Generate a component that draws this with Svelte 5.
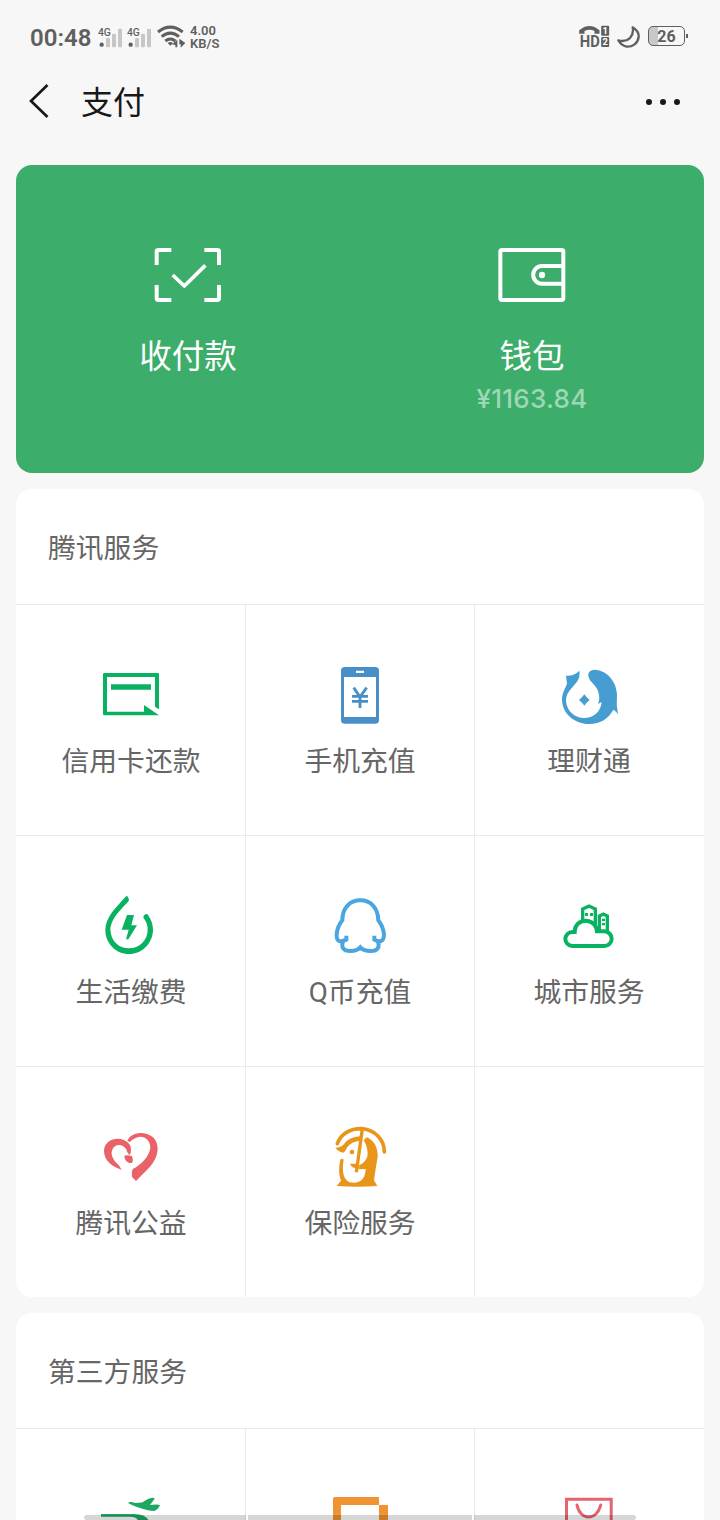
<script>
  const tencent = [
    { icon: 'card', label: '信用卡还款', box: '123 0 240 240' },
    { icon: 'phone', label: '手机充值', box: '0 0 240 240' },
    { icon: 'fish', label: '理财通', box: '687 0 240 240' },
    { icon: 'drop', label: '生活缴费', box: '3 3 240 240' },
    { icon: 'penguin', label: 'Q币充值', box: '0 3 240 240' },
    { icon: 'city', label: '城市服务', box: '687 3 240 240' },
    { icon: 'heart', label: '腾讯公益', box: '3 6 240 240' },
    { icon: 'shield', label: '保险服务', box: '0 6 240 240' },
    null,
  ];

  const thirdParty = [
    { icon: 'plane', box: '91 1479 80 80' },
    { icon: 'order', box: '320 1479 80 80' },
    { icon: 'bag', box: '549 1479 80 80' },
  ];
</script>

{#snippet glyph(name)}
  {#if name === 'card'}
    <g fill="#09b261">
      <path d="M163 54H323q4 0 4 4V163L315 155V66H171V170H282V150L327 181H163q-4 0-4-4V58q0-4 4-4z" />
      <path d="M183 88H303V104H183z" />
    </g>
  {:else if name === 'phone'}
    <rect x="63" y="36" width="114" height="170" rx="11" fill="#488fca" />
    <path d="M72 66H168V186H72zM108 47H132V54H108z" fill="#fff" />
    <path d="M101 98L120 126L140 98M96 124H144M96 139H144M120 124V159" fill="none" stroke="#488fca" stroke-width="8.500" />
  {:else if name === 'fish'}
    <g fill="#459dd2">
      <path d="M738 62Q762 64 778 47Q782 68 768 84C752 103 738 115 738 138C740 168 765 190 795 189C822 188 842 170 845 141L834 147C840 135 838 120 834 108C828 92 812 82 807 70C800 52 812 44 824 44C862 46 890 80 891 120Q888 150 894 178Q888 168 880 164C866 190 842 207 808 207C762 207 726 175 726 132C727 110 738 96 741 86Q739 72 738 62Z" />
      <path d="M793 118Q800 128 809 135Q800 142 793 152Q786 142 777 135Q786 128 793 118z" />
    </g>
  {:else if name === 'drop'}
    <g fill="#09b261">
      <path d="M110 32Q119 40 116 48C106 62 63 95 61 134C63 168 86 190 117 190C148 190 173 166 173 134C173 118 168 108 160 98Q160 88 172 87Q189 110 189 135C188 176 156 207 117 207C78 207 46 176 46 135C46 95 80 65 110 32Z" />
      <path d="M111 90H132L124 121H141L115 163H108L116 134H95z" />
    </g>
  {:else if name === 'penguin'}
    <g fill="none" stroke="#4ba5df" stroke-width="12">
      <path d="M79 152V164Q66 170 58 168Q49 165 50 148Q52 124 67 106C67 68 90 46 121 46C152 46 174 68 175 106Q189 124 192 148Q192 165 183 168Q175 170 163 164V152" />
      <path d="M70 166Q58 198 92 198Q112 198 121 187Q131 198 152 198Q184 198 173 166" />
    </g>
  {:else if name === 'city'}
    <g fill="none" stroke="#09b261" stroke-width="12">
      <path d="M757 183a20 20 0 0 1 0-42H764C764 121 778 107 797 107C816 107 830 121 831 139H853a21 21 0 0 1 0 44z" />
      <path d="M788 106V72L807 63L826 72V124" stroke-width="10" />
      <path d="M838 135V93L850 87L862 93V138" stroke-width="10" />
    </g>
    <path d="M795 84h9v9h-9zM810 84h9v9h-9zM846 101h9v7h-9zM846 114h9v7h-9z" fill="#09b261" />
  {:else if name === 'heart'}
    <g fill="#ea6168">
      <path d="M42 108C42 84 62 71 84 71C106 72 123 86 123 102Q124 114 118 120Q110 113 109 103Q98 88 84 90C70 93 64 106 65 118Q68 136 86 150L95 164C68 156 42 138 42 108Z" />
      <path d="M103 122Q112 118 126 124Q131 134 126 144H118Q102 136 103 122z" />
      <path d="M112 76Q122 56 150 54C185 54 204 74 203 104C200 145 168 165 138 198L126 186Q124 170 128 162C152 150 178 125 181 98C181 78 168 65 150 65Q130 68 119 82Z" />
    </g>
  {:else if name === 'shield'}
    <g fill="none" stroke="#e8951a" stroke-width="11" stroke-linecap="round">
      <path d="M52 86C62 56 92 41 123 41C165 43 193 75 193 111" />
      <path d="M127 42L109 172" stroke-linecap="butt" stroke-width="10" />
    </g>
    <g fill="#e8951a">
      <path d="M140 67C162 75 174 98 173 125Q166 165 162 196L172 213Q110 217 50 213L63 197C55 175 57 155 61 134Q66 128 71 134Q66 160 71 180Q77 203 100 203C125 203 136 188 137 162L117 163L118 150C137 142 146 128 142 105Q139 88 131 76Z" />
      <path d="M46 98Q62 97 70 89Q86 66 120 64V77Q94 80 82 96Q76 110 70 113Q54 110 46 98z" />
      <circle cx="96" cy="111" r="7" />
      <path d="M90 146H116V161Q94 160 90 146z" />
    </g>
  {:else if name === 'plane'}
    <g fill="#1fa862">
      <path d="M128 1503Q129 1501.500 132 1502L135 1503L142 1502.500Q149 1498 152 1497.700Q155 1497.700 154.500 1499L150 1505Q157 1504 160 1505Q158 1510 154 1511L149 1510.500Q137 1508 128 1503z" />
      <path d="M101 1514H134Q146 1514 149 1521H138Q137 1516.700 130 1516.700H101z" />
    </g>
  {:else if name === 'order'}
    <path d="M335 1497H379V1505H388V1560H379V1505H341V1560H333V1499Q333 1497 335 1497z" fill="#f09332" />
  {:else if name === 'bag'}
    <g fill="none" stroke="#e5646d" stroke-width="3">
      <path d="M566.500 1560V1499.200H611.200V1560" />
      <path d="M577 1505C580 1521 597 1521 600.700 1505" stroke-linecap="round" />
    </g>
  {/if}
{/snippet}

{#snippet section(title, items)}
  <section class="panel">
    <h2>{title}</h2>
    <div class="grid">
      {#each items as item}
        <div class="cell">
          {#if item}
            <svg class="cell-icon" viewBox={item.box} aria-hidden="true">
              {@render glyph(item.icon)}
            </svg>
            {#if item.label}<span>{item.label}</span>{/if}
          {/if}
        </div>
      {/each}
    </div>
  </section>
{/snippet}

{#snippet signal()}
  <svg class="signal" viewBox="234 33 72 63" aria-hidden="true">
    <g fill="#c6c6c6">
      <rect x="258" y="66" width="12" height="28" rx="4" />
      <rect x="276" y="53" width="12" height="41" rx="4" />
      <rect x="294" y="38" width="12" height="56" rx="4" />
    </g>
    <circle cx="245" cy="86" r="6.500" fill="#5f5f5f" />
    <text x="234" y="60" font-size="31" font-weight="500" fill="#5f5f5f">4G</text>
  </svg>
{/snippet}

<div class="screen">
  <div class="status">
    <span class="time">00:48</span>
    {@render signal()}
    {@render signal()}
    <svg class="wifi" viewBox="411 30 87 72" aria-hidden="true">
      <g fill="none" stroke="#5f5f5f" stroke-width="9">
        <path d="M414 51Q451 22 488 51" />
        <path d="M425 65Q451 44 477 65" />
        <path d="M436 78Q451 66 466 78" />
      </g>
      <path d="M443 84Q451 78 459 84L451 92zM456 88L472 74V97H466V90zM478 71L496 84L482 98V88H478z" fill="#5f5f5f" />
    </svg>
    <span class="speed">4.00<br />KB/S</span>
    <svg class="hd" viewBox="30 30 92 75" aria-hidden="true">
      <path d="M30 56V46Q61 20 91 46V56H76V48Q61 40 46 48V56z" fill="#5f5f5f" />
      <text x="32" y="96" font-size="50" font-weight="700" textLength="60" lengthAdjust="spacingAndGlyphs" fill="#5f5f5f">HD</text>
      <rect x="96" y="32" width="24" height="30" rx="3" fill="#5f5f5f" />
      <rect x="96" y="66" width="24" height="30" rx="3" fill="#5f5f5f" />
      <text x="108" y="57" font-size="28" font-weight="700" text-anchor="middle" fill="#fff">1</text>
      <text x="108" y="91" font-size="28" font-weight="700" text-anchor="middle" fill="#fff">2</text>
    </svg>
    <svg class="moon" viewBox="141 33 69 66" aria-hidden="true">
      <path d="M188 37Q208 50 206 66C203 87 186 96 170 95Q153 92 145 76Q166 82 180 69Q192 55 188 37z" fill="none" stroke="#5f5f5f" stroke-width="7" stroke-linejoin="round" />
    </svg>
    <div class="battery"><span>26</span></div>
  </div>

  <header>
    <svg class="back" viewBox="0 0 22 36" aria-label="返回">
      <path d="M19.500 2L3 18L19.500 34" fill="none" stroke="#181818" stroke-width="2.700" />
    </svg>
    <h1>支付</h1>
    <div class="more"><i></i><i></i><i></i></div>
  </header>

  <main>
    <div class="wallet">
      <div class="entry">
        <svg viewBox="66 30 216 180" aria-hidden="true">
          <g fill="none" stroke="#fff" stroke-width="12">
            <path d="M80 90V50q0-5 5-5H124M223 45H262q5 0 5 5V90M267 150v40q0 5-5 5H223M124 195H85q-5 0-5-5V150" />
            <path d="M128 120L163 153L226 91" stroke-width="11" stroke-linejoin="round" />
          </g>
        </svg>
        <span class="entry-name">收付款</span>
      </div>
      <div class="entry">
        <svg viewBox="108 30 216 180" aria-hidden="true">
          <g fill="none" stroke="#fff" stroke-width="12">
            <rect x="121" y="45" width="189" height="150" rx="5" />
            <path d="M310 93H246a26.500 26.500 0 0 0 0 53H310" />
          </g>
          <circle cx="246" cy="120" r="9.500" fill="#fff" />
        </svg>
        <span class="entry-name">钱包</span>
        <span class="balance">¥1163.84</span>
      </div>
    </div>

    {@render section('腾讯服务', tencent)}
    {@render section('第三方服务', thirdParty)}
  </main>

  <div class="gesture"><i></i><i></i><i></i></div>
</div>

<style>
  :global(body) {
    background: #f7f7f7;
  }

  .screen {
    position: relative;
    width: 720px;
    height: 1520px;
    overflow: hidden;
    background: #f7f7f7;
    font-family: Roboto, 'Noto Sans CJK SC', sans-serif;
    color: #666;
  }

  svg {
    display: block;
    flex-shrink: 0;
  }

  .status {
    display: flex;
    align-items: center;
    height: 74px;
    padding: 0 32px 0 30px;
    color: #5f5f5f;
  }

  .time {
    width: 68px;
    font-size: 24px;
    font-weight: 600;
    line-height: 28px;
    padding-top: 2px;
  }

  .signal {
    width: 24px;
    height: 21px;
    margin-right: 5px;
  }

  .signal + .signal {
    margin-right: 6px;
  }

  .wifi {
    width: 29px;
    height: 24px;
  }

  .speed {
    margin-left: 4px;
    font-size: 13px;
    font-weight: 600;
    line-height: 13px;
    white-space: nowrap;
  }

  .hd {
    width: 31px;
    height: 25px;
    margin-left: auto;
    overflow: visible;
  }

  .moon {
    width: 23px;
    height: 22px;
    margin: 0 8px 0 7px;
  }

  .battery {
    position: relative;
    box-sizing: border-box;
    width: 37px;
    height: 20px;
    margin: -2px 3px 0 0;
    border: 1.5px solid #5f5f5f;
    border-radius: 5px;
    background: linear-gradient(90deg, #c8c8c8 26%, transparent 26%);
    font-size: 16px;
    font-weight: 700;
    line-height: 19px;
    text-align: center;
  }

  .battery::after {
    content: '';
    position: absolute;
    top: 7px;
    right: -4px;
    width: 2px;
    height: 4px;
    background: #5f5f5f;
  }

  header {
    display: flex;
    align-items: center;
    height: 56px;
    padding: 0 40px 0 28px;
    color: #181818;
  }

  .back {
    width: 22px;
    height: 36px;
    margin-top: -2px;
  }

  h1 {
    margin: 0 0 0 31px;
    padding-top: 2px;
    font-size: 32px;
    font-weight: 400;
    line-height: 48px;
  }

  .more {
    display: flex;
    gap: 8px;
    margin-left: auto;
  }

  .more i {
    width: 6px;
    height: 6px;
    border-radius: 50%;
    background: #181818;
  }

  main {
    display: flex;
    flex-direction: column;
    gap: 16px;
    padding: 35px 16px 0;
  }

  .wallet {
    display: grid;
    grid-template-columns: 1fr 1fr;
    height: 308px;
    border-radius: 16px;
    background: #3dad6b;
    color: #fff;
  }

  .entry {
    display: flex;
    flex-direction: column;
    align-items: center;
    padding-top: 80px;
  }

  .entry svg {
    width: 72px;
    height: 60px;
  }

  .entry-name {
    margin-top: 28px;
    font-size: 32.5px;
    line-height: 48px;
  }

  .balance {
    font-family: Inter, sans-serif;
    font-size: 26px;
    font-weight: 500;
    letter-spacing: 0.3px;
    line-height: 36px;
    color: #9dd8b4;
  }

  .panel {
    overflow: hidden;
    border-radius: 16px;
    background: #fff;
  }

  h2 {
    margin: 0;
    padding: 4px 32px 0;
    font-size: 27.8px;
    font-weight: 400;
    line-height: 111px;
  }

  .grid {
    display: grid;
    grid-template-columns: 230px 229px 229px;
    grid-auto-rows: 231px;
  }

  .cell {
    display: flex;
    flex-direction: column;
    align-items: center;
    box-sizing: border-box;
    padding: 50px 1px 0 0;
    border-top: 1px solid #ebebeb;
    box-shadow: inset -1px 0 #ebebeb;
    font-size: 27.8px;
    line-height: 40px;
  }

  .cell:nth-child(3n + 1) {
    padding-right: 0;
  }

  .cell:nth-child(3n) {
    box-shadow: none;
  }

  .cell-icon {
    width: 80px;
    height: 80px;
    margin-bottom: 7px;
  }

  .gesture {
    position: absolute;
    bottom: 0;
    left: 84px;
    display: grid;
    grid-template-columns: 162px 224px 162px;
    gap: 2px;
    height: 5px;
  }

  .gesture i {
    background: rgba(0, 0, 0, 0.16);
  }

  .gesture i:first-child {
    border-radius: 3px 0 0 3px;
  }

  .gesture i:last-child {
    border-radius: 0 3px 3px 0;
  }
</style>
